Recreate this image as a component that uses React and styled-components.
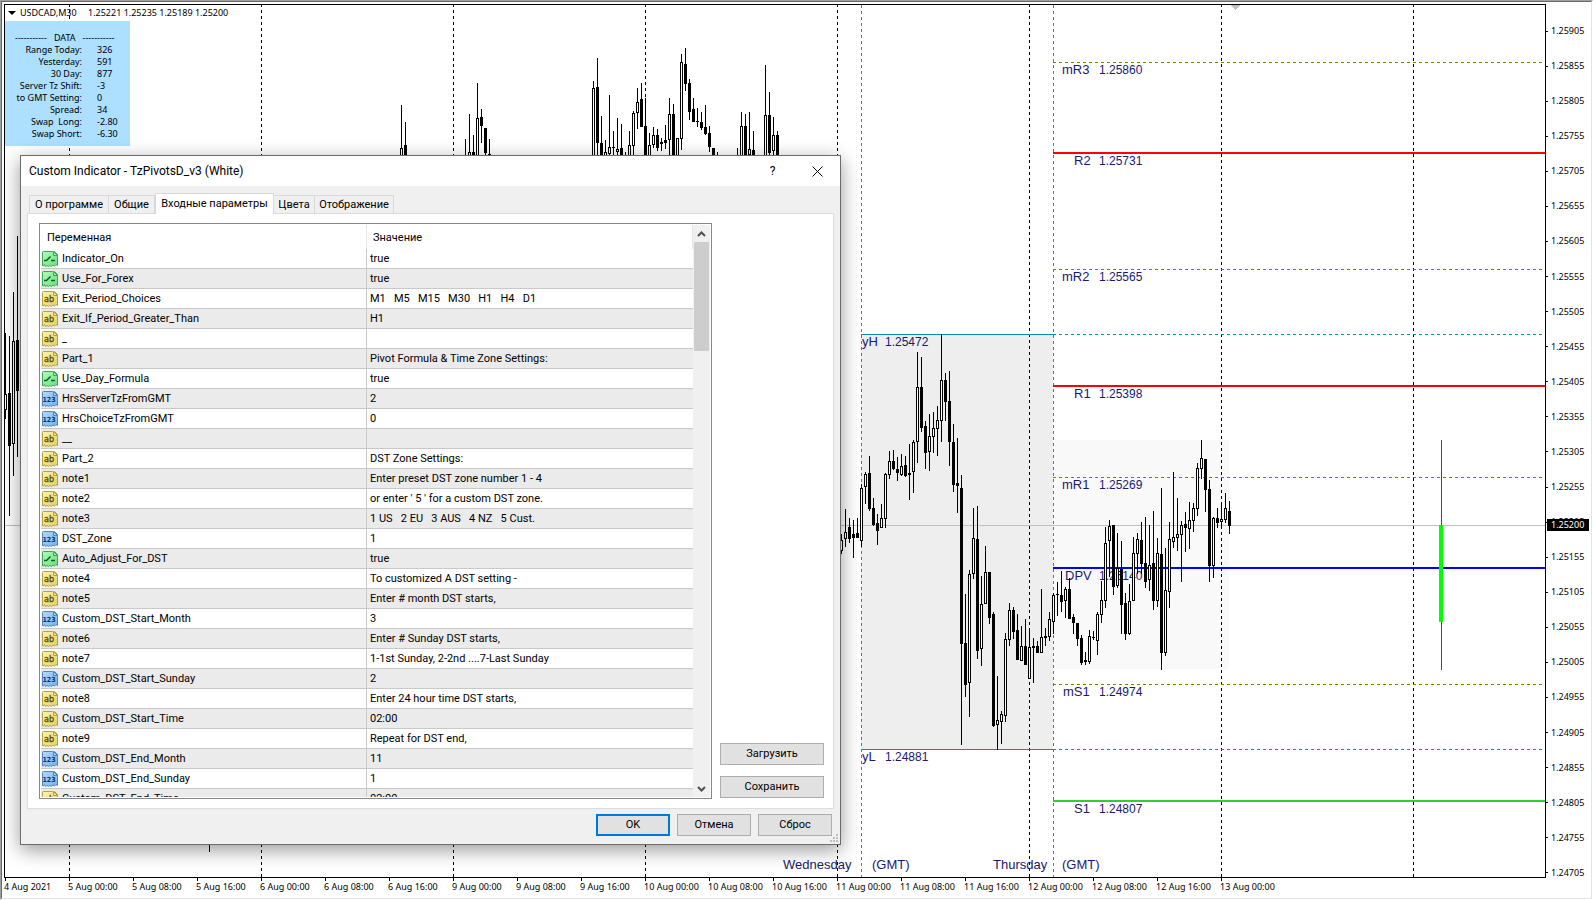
import { useState } from 'react';

import styled, { createGlobalStyle, css } from 'styled-components';

const UI_FONT = `Roboto, 'Liberation Sans', sans-serif`;
const CHART_FONT = `'Noto Sans', 'Open Sans', sans-serif`;
const ICON_FONT = `'DejaVu Sans Condensed', 'DejaVu Sans', sans-serif`;
const LABEL_FONT = `'Liberation Sans', Arial, sans-serif`;

const INPUTS = [
  ['bool', 'Indicator_On', 'true'],
  ['bool', 'Use_For_Forex', 'true'],
  ['text', 'Exit_Period_Choices', 'M1   M5   M15   M30   H1   H4   D1'],
  ['text', 'Exit_If_Period_Greater_Than', 'H1'],
  ['text', '_', ''],
  ['text', 'Part_1', 'Pivot Formula & Time Zone Settings:'],
  ['bool', 'Use_Day_Formula', 'true'],
  ['int', 'HrsServerTzFromGMT', '2'],
  ['int', 'HrsChoiceTzFromGMT', '0'],
  ['text', '__', ''],
  ['text', 'Part_2', 'DST Zone Settings:'],
  ['text', 'note1', 'Enter preset DST zone number 1 - 4'],
  ['text', 'note2', "or enter ' 5 ' for a custom DST zone."],
  ['text', 'note3', '1 US   2 EU   3 AUS   4 NZ   5 Cust.'],
  ['int', 'DST_Zone', '1'],
  ['bool', 'Auto_Adjust_For_DST', 'true'],
  ['text', 'note4', 'To customized A DST setting -'],
  ['text', 'note5', 'Enter # month DST starts,'],
  ['int', 'Custom_DST_Start_Month', '3'],
  ['text', 'note6', 'Enter # Sunday DST starts,'],
  ['text', 'note7', '1-1st Sunday, 2-2nd ....7-Last Sunday'],
  ['int', 'Custom_DST_Start_Sunday', '2'],
  ['text', 'note8', 'Enter 24 hour time DST starts,'],
  ['text', 'Custom_DST_Start_Time', '02:00'],
  ['text', 'note9', 'Repeat for DST end,'],
  ['int', 'Custom_DST_End_Month', '11'],
  ['int', 'Custom_DST_End_Sunday', '1'],
  ['text', 'Custom_DST_End_Time', '02:00'],
];

const TABS = ['О программе', 'Общие', 'Входные параметры', 'Цвета', 'Отображение'];
const TAB_WIDTHS = [80, 46, 119, 41, 79];

const STATS = [
  ['Range Today:', '326'],
  ['Yesterday:', '591'],
  ['30 Day:', '877'],
  ['Server Tz Shift:', '-3'],
  ['to GMT Setting:', '0'],
  ['Spread:', '34'],
  ['Swap  Long:', '-2.80'],
  ['Swap Short:', '-6.30'],
];

const PRICES = Array.from({ length: 25 }, (_, i) => ((125905 - i * 50) / 100000).toFixed(5));

const TIMES = ['4 Aug 2021', '5 Aug 00:00', '5 Aug 08:00', '5 Aug 16:00'].concat(
  ['6', '9', '10', '11', '12'].flatMap(day => ['00:00', '08:00', '16:00'].map(hour => `${day} Aug ${hour}`)),
  '13 Aug 00:00',
);

const DAY_LINES = [69, 261, 453, 645, 837, 1029, 1221, 1413];

const LEVELS = [
  { name: 'mR3', price: '1.25860', y: 62, x: 1062, color: '#808000' },
  { name: 'R2', price: '1.25731', y: 152, x: 1074, color: '#ff0000', solid: true },
  { name: 'mR2', price: '1.25565', y: 269, x: 1062, color: '#808000' },
  { name: 'R1', price: '1.25398', y: 385, x: 1074, color: '#ff0000', solid: true },
  { name: 'mR1', price: '1.25269', y: 477, x: 1062, color: '#808000' },
  { name: 'DPV', price: '1.25140', y: 567, x: 1065, color: '#0000ff', solid: true },
  { name: 'mS1', price: '1.24974', y: 684, x: 1063, color: '#808000' },
  { name: 'S1', price: '1.24807', y: 800, x: 1074, color: '#32cd32', solid: true },
];

const YESTERDAY = [
  { name: 'yH', price: '1.25472', y: 334 },
  { name: 'yL', price: '1.24881', y: 749 },
];

const DAY_NAMES = [
  { text: 'Wednesday', x: 783 },
  { text: '(GMT)', x: 872 },
  { text: 'Thursday', x: 993 },
  { text: '(GMT)', x: 1062 },
];

// runs of neighbouring bars, 4px apart: [high, body top, body bottom, low, 1 = rising]
const BARS = [
  {
    x: 5,
    bars: [
      [333, 394, 410, 419, 1],
      [336, 393, 446, 516, 0],
      [292, 341, 444, 476, 1],
      [236, 340, 391, 457, 0],
    ],
  },
  { x: 209, bars: [[800, 820, 821, 852, 0]] },
  {
    x: 401,
    bars: [
      [105, 148, 160, 160, 1],
      [122, 145, 160, 160, 0],
    ],
  },
  {
    x: 465,
    bars: [
      [139, 158, 160, 160, 0],
      [114, 152, 160, 160, 1],
      [135, 152, 160, 160, 0],
      [83, 118, 160, 160, 1],
      [109, 117, 126, 143, 0],
      [128, 128, 153, 160, 0],
      [139, 154, 160, 160, 0],
    ],
  },
  {
    x: 593,
    bars: [
      [81, 88, 160, 160, 1],
      [58, 87, 143, 160, 0],
      [116, 143, 160, 160, 0],
      [140, 152, 160, 160, 1],
      [95, 147, 154, 160, 1],
      [131, 147, 148, 160, 0],
      [118, 149, 152, 155, 1],
      [124, 148, 160, 160, 0],
      [152, 155, 160, 160, 0],
      [131, 145, 160, 160, 1],
      [111, 113, 146, 160, 1],
      [88, 102, 113, 129, 1],
      [83, 99, 127, 127, 0],
      [98, 126, 160, 160, 0],
      [133, 145, 160, 160, 1],
      [127, 135, 145, 148, 1],
      [129, 135, 148, 151, 0],
      [138, 142, 144, 151, 0],
      [125, 140, 143, 149, 0],
      [98, 114, 140, 155, 1],
      [104, 114, 160, 160, 0],
      [138, 138, 160, 160, 1],
      [54, 62, 139, 150, 1],
      [48, 64, 84, 91, 0],
      [79, 83, 112, 120, 0],
      [98, 109, 122, 122, 0],
      [108, 121, 122, 127, 0],
      [112, 122, 128, 130, 0],
      [105, 127, 134, 135, 0],
      [126, 133, 147, 152, 0],
      [148, 148, 160, 160, 0],
      [152, 158, 160, 160, 0],
    ],
  },
  {
    x: 737,
    bars: [
      [148, 158, 160, 160, 0],
      [112, 126, 160, 160, 1],
      [114, 126, 160, 160, 0],
      [112, 149, 155, 160, 1],
      [131, 150, 160, 160, 0],
    ],
  },
  {
    x: 765,
    bars: [
      [65, 115, 160, 160, 1],
      [92, 115, 153, 160, 0],
      [117, 135, 151, 160, 1],
      [131, 135, 160, 160, 0],
    ],
  },
  {
    x: 841,
    bars: [
      [534, 540, 551, 554, 1],
      [509, 532, 539, 547, 1],
      [518, 527, 539, 543, 0],
      [520, 534, 538, 558, 0],
      [518, 533, 538, 538, 0],
      [484, 488, 541, 547, 1],
      [472, 474, 487, 504, 1],
      [456, 473, 509, 511, 0],
      [498, 508, 525, 526, 0],
      [514, 523, 531, 545, 0],
      [504, 518, 528, 528, 1],
      [473, 474, 519, 528, 1],
      [451, 461, 475, 479, 1],
      [450, 461, 469, 470, 0],
      [457, 469, 473, 481, 0],
      [454, 466, 475, 476, 1],
      [456, 465, 476, 477, 0],
      [444, 473, 475, 500, 0],
      [440, 442, 472, 493, 1],
      [352, 387, 442, 463, 1],
      [357, 387, 428, 432, 0],
      [421, 426, 453, 469, 0],
      [414, 436, 452, 471, 1],
      [412, 428, 437, 453, 1],
      [406, 420, 429, 456, 1],
      [334, 380, 421, 442, 1],
      [373, 380, 402, 421, 0],
      [371, 401, 442, 466, 0],
      [424, 442, 485, 492, 0],
      [438, 483, 486, 513, 0],
      [475, 488, 644, 745, 0],
      [594, 643, 685, 697, 0],
      [570, 574, 683, 717, 1],
      [508, 538, 574, 579, 1],
      [506, 539, 651, 659, 0],
      [576, 604, 649, 666, 1],
      [546, 572, 604, 604, 1],
      [572, 572, 618, 624, 0],
      [612, 614, 726, 727, 0],
      [676, 720, 725, 750, 1],
      [711, 714, 722, 744, 1],
      [633, 639, 716, 722, 1],
      [603, 610, 640, 646, 1],
      [607, 610, 632, 639, 0],
      [614, 630, 660, 660, 0],
      [626, 646, 661, 661, 1],
      [619, 646, 665, 665, 0],
      [629, 647, 679, 679, 1],
      [638, 646, 648, 683, 0],
      [641, 646, 653, 653, 0],
      [589, 637, 653, 653, 1],
      [628, 636, 638, 646, 0],
      [612, 619, 637, 641, 1],
      [593, 595, 622, 634, 1],
      [582, 594, 595, 616, 0],
      [571, 595, 602, 612, 0],
      [587, 589, 601, 618, 1],
      [578, 589, 619, 619, 0],
      [614, 617, 623, 634, 0],
      [623, 623, 639, 646, 0],
      [635, 638, 663, 665, 0],
      [652, 660, 662, 665, 0],
      [630, 636, 662, 664, 1],
      [631, 637, 638, 640, 0],
      [612, 614, 641, 655, 1],
      [581, 600, 615, 623, 1],
      [527, 543, 601, 608, 1],
      [520, 526, 541, 577, 1],
      [525, 525, 587, 595, 0],
      [533, 568, 586, 588, 1],
      [541, 569, 605, 634, 0],
      [593, 603, 634, 640, 0],
      [584, 601, 634, 635, 1],
      [537, 553, 601, 601, 1],
      [533, 539, 554, 574, 1],
      [522, 540, 564, 574, 0],
      [517, 563, 582, 588, 0],
      [525, 565, 580, 591, 1],
      [511, 563, 601, 610, 0],
      [538, 553, 601, 607, 1],
      [488, 554, 653, 670, 0],
      [548, 590, 653, 656, 1],
      [522, 539, 592, 608, 1],
      [472, 537, 542, 548, 1],
      [498, 534, 538, 551, 1],
      [521, 525, 535, 582, 1],
      [512, 524, 528, 552, 0],
      [502, 520, 529, 549, 1],
      [503, 508, 521, 532, 1],
      [463, 468, 509, 516, 1],
      [440, 458, 469, 479, 1],
      [459, 459, 490, 512, 0],
      [480, 489, 566, 582, 0],
      [517, 518, 566, 578, 1],
      [508, 518, 523, 528, 0],
      [502, 519, 522, 529, 1],
      [493, 508, 520, 523, 1],
      [501, 511, 526, 534, 0],
    ],
  },
];

const ICONS = {
  bool: { light: '#b4fbb9', dark: '#66dd7c', edge: '#3fa653', fold: '#9af0a5' },
  text: { light: '#fdf6b0', dark: '#e0cf63', edge: '#b3a03f', fold: '#f3e993' },
  int: { light: '#b5dafb', dark: '#74aeea', edge: '#4f86bf', fold: '#a9d0f7' },
};

const TypeIcon = ({ type }) => {
  const { light, dark, edge, fold } = ICONS[type];
  return (
    <IconSvg viewBox="0 0 16 16" aria-hidden="true">
      <defs>
        <linearGradient id={`fill-${type}`} x1="0" y1="0" x2="1" y2="1">
          <stop offset="0" stopColor={light} />
          <stop offset="1" stopColor={dark} />
        </linearGradient>
      </defs>
      <path
        d="M.5 1.5q0-1 1-1H10.500l1 1 1-1L15.500 3.500V14.500l-1.500-1-1.500 1.500-1.500-1-1.500 1.500-1.500-1-1.500 1-1.500-1-1.500 1L2.500 13.500l-1 1.500H.5z"
        fill={`url(#fill-${type})`}
        stroke={edge}
      />
      <path d="M11.500.500V4.500H15.500z" fill={fold} stroke={edge} />
      {type === 'bool' && (
        <path d="M2 9.500h2.500L8.500 5.500M9 9.500H13" fill="none" stroke="#12602a" strokeWidth="1.5" />
      )}
      {type === 'text' && (
        <IconText x="7" y="11" fontSize="9" fill="#5c4b00" stroke="#5c4b00" strokeWidth=".3">
          ab
        </IconText>
      )}
      {type === 'int' && (
        <IconText x="7" y="11" fontSize="7" fill="#0c3461" fontWeight="700">
          123
        </IconText>
      )}
    </IconSvg>
  );
};

const Candle = ({ x, bar: [high, top, bottom, low, rising] }) => (
  <>
    <rect x={x} y={high} width="1" height={Math.max(low - high, 1)} />
    <rect x={x - 1} y={top} width="3" height={Math.max(bottom - top, 1)} />
    {rising === 1 && <rect x={x} y={top + 1} width="1" height={Math.max(bottom - top - 2, 1)} fill="#fff" />}
  </>
);

const Chart = () => (
  <ChartSvg role="img" aria-label="USDCAD M30">
    <g transform="translate(-5 -5)" shapeRendering="crispEdges">
      <rect x="861" y="334" width="192" height="415" fill="#eeeeee" />
      <rect x="1053" y="440" width="176" height="229" fill="#f9f9f9" />
      {DAY_LINES.map(x => (
        <line key={x} x1={x + 0.5} x2={x + 0.5} y1="4" y2="110%" stroke="#000" strokeDasharray="3 3" />
      ))}
      {[861, 1053].map(x => (
        <line key={x} x1={x + 0.5} x2={x + 0.5} y1="5" y2="110%" stroke="#808000" strokeDasharray="3 3" />
      ))}
      <rect x="5" y="525" width="100%" height="1" fill="#c0c0c0" />
      {YESTERDAY.map(({ name, price, y }) => (
        <g key={name}>
          <rect x="861" y={y} width="192" height="1" fill="#0a90a8" />
          <line x1="1053" x2="110%" y1={y + 0.5} y2={y + 0.5} stroke="#0a90a8" strokeDasharray="3 3" />
          <LevelText x="862" y={y + 12}>
            {name}
          </LevelText>
          <LevelPrice x="885" y={y + 12}>
            {price}
          </LevelPrice>
        </g>
      ))}
      {LEVELS.map(({ name, price, x, y, color, solid }) => (
        <g key={name}>
          {solid ? (
            <rect x="1053" y={y} width="100%" height="2" fill={color} />
          ) : (
            <line x1="1053" x2="110%" y1={y + 0.5} y2={y + 0.5} stroke={color} strokeDasharray="3 3" />
          )}
          <LevelText x={x} y={solid ? y + 13 : y + 12}>
            {name}
          </LevelText>
          <LevelPrice x="1099" y={solid ? y + 13 : y + 12}>
            {price}
          </LevelPrice>
        </g>
      ))}
      {DAY_NAMES.map(({ text, x }) => (
        <LevelText key={x} x={x} y="869">
          {text}
        </LevelText>
      ))}
      {BARS.map(run => run.bars.map((bar, i) => <Candle key={run.x + i * 4} x={run.x + i * 4} bar={bar} />))}
      <rect x="1441" y="440" width="1" height="230" fill="#008000" />
      <rect x="1439" y="525" width="4" height="97" fill="#00ff00" />
      <path d="M1231 5h9l-4.500 5z" fill="#c0c0c0" />
    </g>
  </ChartSvg>
);

const InputsDialog = () => {
  const [activeTab, setActiveTab] = useState(2);

  return (
    <Dialog role="dialog" aria-labelledby="dialog-title">
      <TitleBar>
        <Title id="dialog-title">Custom Indicator - TzPivotsD_v3 (White)</Title>
        <TitleButton type="button" aria-label="Help">
          ?
        </TitleButton>
        <TitleButton type="button" aria-label="Close">
          <svg width="11" height="11" viewBox="0 0 11 11" aria-hidden="true">
            <path d="M.5.5l10 10M10.500.5l-10 10" stroke="#000" fill="none" />
          </svg>
        </TitleButton>
      </TitleBar>
      <TabList role="tablist">
        {TABS.map((tab, i) => (
          <Tab
            key={tab}
            type="button"
            role="tab"
            aria-selected={i === activeTab}
            $active={i === activeTab}
            $width={TAB_WIDTHS[i]}
            onClick={() => setActiveTab(i)}
          >
            {tab}
          </Tab>
        ))}
      </TabList>
      <Pane role="tabpanel">
        <ListBox>
          <ListView>
            <InputTable>
              <colgroup>
                <NameCol />
                <col />
              </colgroup>
              <thead>
                <tr>
                  <HeadCell>Переменная</HeadCell>
                  <HeadCell>Значение</HeadCell>
                </tr>
              </thead>
              <tbody>
                {INPUTS.map(([type, name, value]) => (
                  <InputRow key={name}>
                    <Cell>
                      <NameBox>
                        <TypeIcon type={type} />
                        {name}
                      </NameBox>
                    </Cell>
                    <Cell>{value}</Cell>
                  </InputRow>
                ))}
              </tbody>
            </InputTable>
          </ListView>
          <ScrollBar>
            <ScrollButton type="button" aria-label="Scroll up">
              <svg width="9" height="6" viewBox="0 0 9 6" aria-hidden="true">
                <path d="M1 5l3.500-3.500L8 5" stroke="#505050" strokeWidth="2" fill="none" />
              </svg>
            </ScrollButton>
            <ScrollTrack>
              <ScrollThumb />
            </ScrollTrack>
            <ScrollButton type="button" aria-label="Scroll down">
              <svg width="9" height="6" viewBox="0 0 9 6" aria-hidden="true">
                <path d="M1 1l3.500 3.500L8 1" stroke="#505050" strokeWidth="2" fill="none" />
              </svg>
            </ScrollButton>
          </ScrollBar>
        </ListBox>
        <SideButtons>
          <PushButton type="button">Загрузить</PushButton>
          <PushButton type="button">Сохранить</PushButton>
        </SideButtons>
      </Pane>
      <Footer>
        <PushButton type="button" $primary>
          OK
        </PushButton>
        <PushButton type="button">Отмена</PushButton>
        <PushButton type="button">Сброс</PushButton>
      </Footer>
      <Grip viewBox="0 0 8 8" aria-hidden="true">
        <path d="M6 0h2v2H6zM3 3h2v2H3zM6 3h2v2H6zM0 6h2v2H0zM3 6h2v2H3zM6 6h2v2H6z" fill="#bfbfbf" />
      </Grip>
    </Dialog>
  );
};

const App = () => (
  <>
    <GlobalStyle />
    <Frame>
      <Terminal>
        <Plot>
          <Chart />
          <Quote>
            <svg width="8" height="4" viewBox="0 0 8 4" aria-hidden="true">
              <path d="M0 0h8L4 4z" />
            </svg>
            <QuoteSymbol>USDCAD,M30</QuoteSymbol>
            <span>1.25221 1.25235 1.25189 1.25200</span>
          </Quote>
          <DataPanel>
            <DataTitle>{'-----------   DATA   -----------'}</DataTitle>
            {STATS.map(([label, value]) => (
              <DataLine key={label}>
                <dt>{label}</dt>
                <dd>{value}</dd>
              </DataLine>
            ))}
          </DataPanel>
        </Plot>
        <PriceAxis>
          {PRICES.map(price => (
            <PriceMark key={price}>{price}</PriceMark>
          ))}
          <CurrentPrice>1.25200</CurrentPrice>
        </PriceAxis>
        <TimeAxis>
          {TIMES.map(time => (
            <TimeMark key={time}>{time}</TimeMark>
          ))}
        </TimeAxis>
      </Terminal>
      <InputsDialog />
    </Frame>
  </>
);

const GlobalStyle = createGlobalStyle`
  *,
  *::before,
  *::after {
    box-sizing: border-box;
  }
  body {
    margin: 0;
    background: #fff;
    color: #000;
    overflow: hidden;
  }
  button {
    font: inherit;
    color: inherit;
    padding: 0;
    border: 0;
    background: none;
  }
`;

const Frame = styled.main`
  position: relative;
  height: 100vh;
  min-height: 860px;
  border: 1px solid;
  border-color: #a0a0a0 #fff #fff #a0a0a0;
`;

const Terminal = styled.div`
  display: grid;
  grid-template-columns: minmax(0, 1fr) 45px;
  grid-template-rows: minmax(0, 1fr) 20px;
  height: 100%;
  padding: 2px 0 0 2px;
  border: 1px solid;
  border-color: #696969 #e3e3e3 #e3e3e3 #696969;
  font-family: ${CHART_FONT};
  font-size: 9px;
  line-height: 12px;
`;

const Plot = styled.section`
  position: relative;
  border: 1px solid #000;
`;

const ChartSvg = styled.svg`
  position: absolute;
  inset: 0;
  width: 100%;
  height: 100%;
`;

const LevelText = styled.text`
  font-family: ${LABEL_FONT};
  font-size: 13px;
  fill: #191970;
`;

const LevelPrice = styled(LevelText)`
  font-size: 12px;
`;

const Quote = styled.div`
  position: relative;
  display: flex;
  align-items: center;
  gap: 4px;
  height: 16px;
  padding-left: 3px;
`;

const QuoteSymbol = styled.span`
  min-width: 64px;
`;

const DataPanel = styled.dl`
  position: relative;
  width: 125px;
  height: 125px;
  margin: 0;
  padding-top: 11px;
  background: #addfff;
`;

const DataTitle = styled.dt`
  padding-left: 10px;
  white-space: pre;
`;

const DataLine = styled.div`
  display: grid;
  grid-template-columns: 77px 1fr;
  column-gap: 15px;
  white-space: pre;
  dt {
    text-align: right;
  }
  dd {
    margin: 0;
  }
`;

const PriceAxis = styled.aside`
  position: relative;
  display: flex;
  flex-direction: column;
  justify-content: space-between;
  padding-top: 21px;
  margin-bottom: -1px;
`;

const PriceMark = styled.div`
  display: flex;
  align-items: center;
  gap: 3px;
  &::before {
    content: '';
    width: 2px;
    height: 1px;
    background: #000;
  }
`;

const CurrentPrice = styled.div`
  position: absolute;
  top: 515px;
  left: 1px;
  width: 42px;
  padding-left: 4px;
  background: #000;
  color: #fff;
`;

const TimeAxis = styled.footer`
  display: flex;
  overflow: hidden;
`;

const TimeMark = styled.div`
  position: relative;
  flex: none;
  width: 64px;
  padding-top: 3px;
  white-space: nowrap;
  &::before {
    content: '';
    position: absolute;
    top: 0;
    left: 1px;
    width: 1px;
    height: 3px;
    background: #000;
  }
`;

const Dialog = styled.section`
  position: absolute;
  left: 19px;
  top: 154px;
  width: 821px;
  border: 1px solid #6b6b6b;
  background: #f0f0f0;
  box-shadow: 0 5px 18px rgba(0, 0, 0, 0.4);
  font-family: ${UI_FONT};
  font-size: 11px;
  line-height: 16px;
`;

const TitleBar = styled.header`
  display: flex;
  align-items: center;
  height: 30px;
  padding-left: 8px;
  background: #fff;
  font-size: 12px;
`;

const Title = styled.h1`
  flex: 1;
  margin: 0;
  font-size: 12px;
  font-weight: 400;
`;

const TitleButton = styled.button`
  display: grid;
  place-items: center;
  width: 45px;
  height: 30px;
`;

const TabList = styled.div`
  display: flex;
  align-items: flex-end;
  padding: 7px 8px 0;
`;

const Tab = styled.button`
  width: ${({ $width }) => $width}px;
  height: 18px;
  padding-top: 1px;
  border: 1px solid #d9d9d9;
  border-width: 1px 1px 0 0;
  white-space: nowrap;
  &:first-child {
    border-left-width: 1px;
  }
  ${({ $active }) =>
    $active &&
    css`
      position: relative;
      height: 21px;
      margin-bottom: -1px;
      padding-bottom: 2px;
      border-left-width: 1px;
      background: #fff;
    `}
`;

const Pane = styled.div`
  display: flex;
  gap: 8px;
  margin: 0 6px;
  padding: 9px 9px 9px 11px;
  border: 1px solid #dcdcdc;
  background: #fff;
`;

const ListBox = styled.div`
  display: flex;
  flex: 1;
  height: 576px;
  padding: 1px;
  border: 1px solid #828790;
`;

const ListView = styled.div`
  flex: 1;
  overflow: hidden;
`;

const InputTable = styled.table`
  width: 100%;
  table-layout: fixed;
  border-collapse: separate;
  border-spacing: 0;
`;

const NameCol = styled.col`
  width: 326px;
`;

const HeadCell = styled.th`
  height: 24px;
  padding: 2px 0 0 6px;
  border-right: 1px solid #e5e5e5;
  font-weight: 400;
  text-align: left;
`;

const Cell = styled.td`
  height: 20px;
  padding: 2px 0 1px 3px;
  border-bottom: 1px solid #c8c8c8;
  white-space: pre;
  &:first-child {
    padding-left: 1px;
    border-right: 1px solid #c8c8c8;
  }
`;

const InputRow = styled.tr`
  &:nth-child(even) {
    background: #ebebeb;
  }
`;

const NameBox = styled.div`
  display: flex;
  align-items: center;
  gap: 4px;
`;

const IconSvg = styled.svg`
  flex: none;
  width: 16px;
  height: 16px;
`;

const IconText = styled.text`
  font-family: ${ICON_FONT};
  text-anchor: middle;
`;

const ScrollBar = styled.div`
  display: flex;
  flex-direction: column;
  width: 17px;
  background: #f0f0f0;
`;

const ScrollButton = styled.button`
  display: grid;
  place-items: center;
  height: 17px;
`;

const ScrollTrack = styled.div`
  flex: 1;
`;

const ScrollThumb = styled.div`
  width: 15px;
  height: 109px;
  margin-left: 1px;
  background: #cdcdcd;
`;

const PushButton = styled.button`
  height: 22px;
  border: 1px solid #adadad;
  background: #e1e1e1;
  ${({ $primary }) =>
    $primary &&
    css`
      border: 2px solid #0078d7;
    `}
`;

const SideButtons = styled.div`
  display: flex;
  flex-direction: column;
  justify-content: flex-end;
  gap: 11px;
  width: 104px;
  padding-bottom: 1px;
`;

const Footer = styled.footer`
  display: flex;
  justify-content: flex-end;
  gap: 7px;
  padding: 5px 8px 8px;
  ${PushButton} {
    width: 74px;
  }
`;

const Grip = styled.svg`
  position: absolute;
  right: 2px;
  bottom: 2px;
  width: 8px;
  height: 8px;
`;

export default App;
